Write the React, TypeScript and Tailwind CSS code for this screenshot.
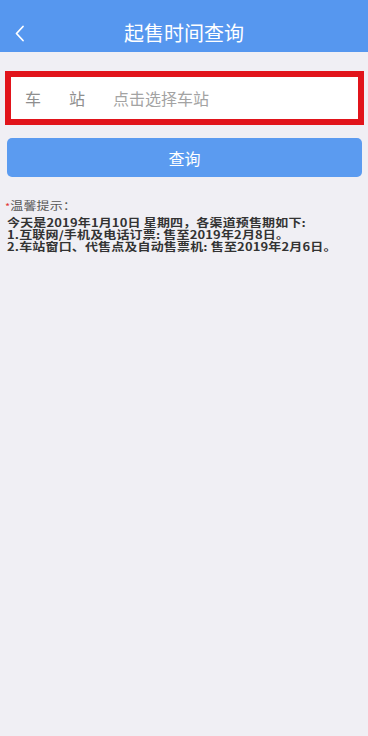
import React from "react";

export default function App() {
  const font = { fontFamily: '"Noto Sans CJK SC", "Noto Sans", sans-serif' };
  return (
    <div className="w-[368px] h-[736px] bg-[#f0eff4] flex flex-col" style={font}>
      <div className="h-[52px] bg-[#5697ef] pt-[14px] flex-none">
        <div className="h-[38px] relative flex items-center justify-center">
          <svg className="absolute left-[14px] top-[11px]" width="12" height="17" viewBox="0 0 12 17">
            <path d="M9 1.5 L2.5 8.5 L9 15.5" fill="none" stroke="#ffffff" strokeWidth="1.8" strokeLinecap="round" strokeLinejoin="round" />
          </svg>
          <span className="text-white text-[20px] leading-none">起售时间查询</span>
        </div>
      </div>

      <div className="mt-[19px] ml-[5px] mr-[4px] h-[54px] border-[6px] border-[#e1141b] bg-white flex items-center pl-[14px]">
        <div className="w-[60px] flex justify-between text-[16px] text-[#8e8e8e] leading-none">
          <span>车</span>
          <span>站</span>
        </div>
        <span className="ml-[28px] text-[16px] text-[#a3a3a3] leading-none">点击选择车站</span>
      </div>

      <button className="mt-[13px] ml-[7px] mr-[6px] h-[39px] rounded-[5px] bg-[#5b9bf0] text-white text-[16px] flex items-center justify-center">
        查询
      </button>

      <div className="mt-[23px] pl-[7px] text-[13px] leading-[14px] tracking-[0.15px] text-[#333] font-bold scale-y-[0.85] origin-top">
        <div className="mb-[6px] -ml-[2px] font-normal text-[#555]">
          <span className="text-[#e23a3a] text-[11px]">*</span>温馨提示：
        </div>
        <div>今天是2019年1月10日 星期四，各渠道预售期如下:</div>
        <div>1.互联网/手机及电话订票: 售至2019年2月8日。</div>
        <div>2.车站窗口、代售点及自动售票机: 售至2019年2月6日。</div>
      </div>
    </div>
  );
}
